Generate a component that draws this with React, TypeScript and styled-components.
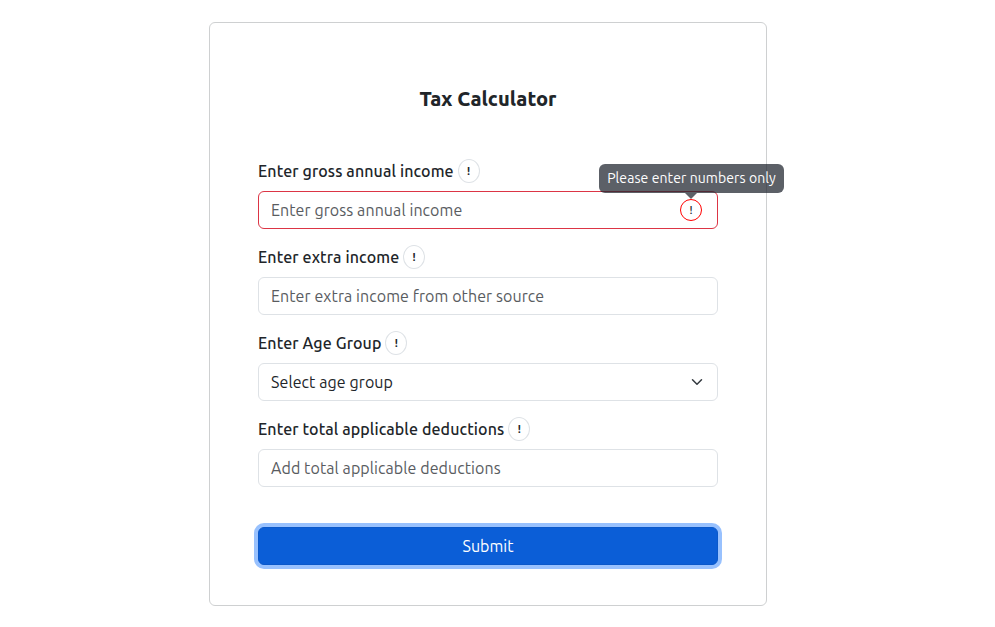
import React from "react";
import styled, { createGlobalStyle } from "styled-components";

const GlobalStyle = createGlobalStyle`
  *, *::before, *::after { box-sizing: border-box; }
  body {
    margin: 0;
    background: #fff;
    color: #212529;
    font-family: Ubuntu, "Noto Sans", sans-serif;
    font-size: 16px;
    line-height: 24px;
    letter-spacing: 0.085px;
  }
`;

const Page = styled.main`
  padding: 22px 0 0 209px;
`;

const Card = styled.form`
  display: flex;
  flex-direction: column;
  width: 558px;
  height: 584px;
  padding: 64px 48px 40px;
  border: 1px solid #ced0d1;
  border-radius: 6px;
`;

const Title = styled.h5`
  margin: 0 0 48px;
  text-align: center;
  font-size: 20px;
  font-weight: 760;
  letter-spacing: 0.02px;
  line-height: 24px;
`;

const Field = styled.div`
  margin-bottom: 16px;
`;

const LabelRow = styled.label`
  display: flex;
  align-items: center;
  gap: 4px;
  height: 24px;
  margin-bottom: 8px;
  font-weight: 500;
  letter-spacing: 0.11px;
`;

const Hint = styled.span<{ $error?: boolean }>`
  position: relative;
  display: inline-flex;
  align-items: center;
  justify-content: center;
  width: 22px;
  height: ${(p) => (p.$error ? 22 : 24)}px;
  border: 1px solid ${(p) => (p.$error ? "#ff0000" : "#dee2e6")};
  border-radius: 50%;
  color: #212529;
  font-size: 11px;
  font-weight: ${(p) => (p.$error ? 500 : 700)};
  line-height: 1;
`;

const Control = styled.div<{ $error?: boolean; $filled?: boolean }>`
  display: flex;
  align-items: center;
  justify-content: space-between;
  height: 38px;
  padding: 0 ${(p) => (p.$error ? 15 : 12)}px 0 12px;
  border: 1px solid ${(p) => (p.$error ? "#dc3545" : "#dee2e6")};
  border-radius: 6px;
  color: ${(p) => (p.$filled ? "#212529" : "#595c5f")};
`;

const Tooltip = styled.span`
  position: absolute;
  bottom: 27px;
  left: -82px;
  width: 185px;
  height: 29px;
  border-radius: 6px;
  background: #212630;
  opacity: 0.73;
  color: #fff;
  font-size: 14px;
  font-weight: 400;
  line-height: 28px;
  text-align: center;
  white-space: nowrap;

  &::after {
    content: "";
    position: absolute;
    top: 100%;
    left: 92px;
    margin-left: -6.4px;
    border: 6.4px solid transparent;
    border-top-color: #212630;
    border-bottom: 0;
  }
`;

const Submit = styled.button`
  height: 38px;
  margin-top: 24px;
  border: 1px solid #0a58ca;
  border-radius: 6px;
  background: #0b5ed7;
  box-shadow: 0 0 0 4px #98c1fe;
  color: #fff;
  font: inherit;
`;

const Chevron = () => (
  <svg width="16" height="12" viewBox="0 0 16 16" fill="none" stroke="#343a40" strokeWidth="2" strokeLinecap="round" strokeLinejoin="round">
    <path d="m2 5 6 6 6-6" />
  </svg>
);

export default function App() {
  return (
    <>
      <GlobalStyle />
      <Page>
        <Card>
          <Title>Tax Calculator</Title>
          <Field>
            <LabelRow>Enter gross annual income<Hint>!</Hint></LabelRow>
            <Control $error>
              Enter gross annual income
              <Hint $error>
                !
                <Tooltip>Please enter numbers only</Tooltip>
              </Hint>
            </Control>
          </Field>
          <Field>
            <LabelRow>Enter extra income<Hint>!</Hint></LabelRow>
            <Control>Enter extra income from other source</Control>
          </Field>
          <Field>
            <LabelRow>Enter Age Group<Hint>!</Hint></LabelRow>
            <Control $filled>Select age group<Chevron /></Control>
          </Field>
          <Field>
            <LabelRow>Enter total applicable deductions<Hint>!</Hint></LabelRow>
            <Control>Add total applicable deductions</Control>
          </Field>
          <Submit type="button">Submit</Submit>
        </Card>
      </Page>
    </>
  );
}
